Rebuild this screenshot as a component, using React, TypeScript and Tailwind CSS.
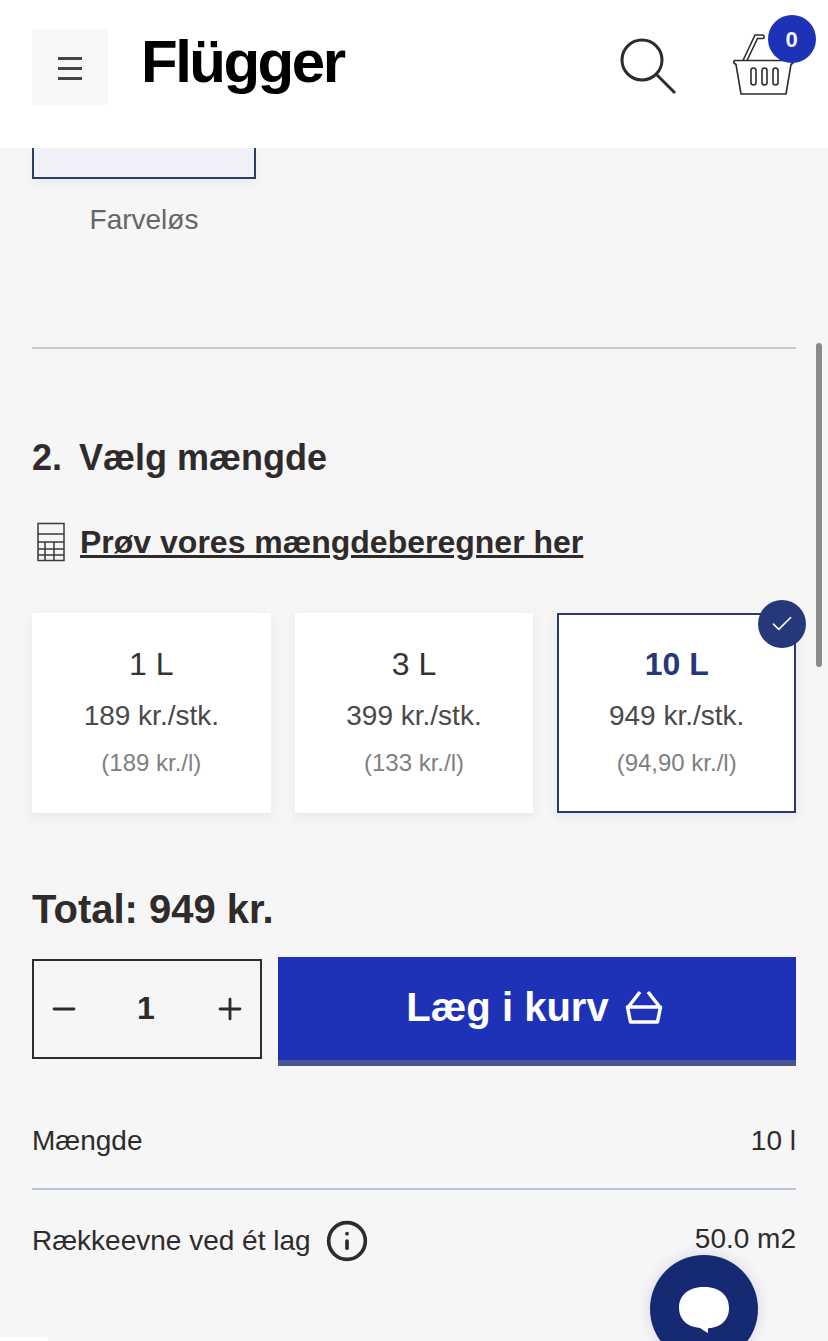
import { Check, Info, Minus, Plus } from "lucide-react";

const sizes = [
  { label: "1 L", price: "189 kr./stk.", unit: "(189 kr./l)", selected: false },
  { label: "3 L", price: "399 kr./stk.", unit: "(133 kr./l)", selected: false },
  { label: "10 L", price: "949 kr./stk.", unit: "(94,90 kr./l)", selected: true },
];

function BasketIcon() {
  return (
    <svg width="64" height="66" viewBox="0 0 64 66" fill="none" stroke="#2f2b2a" strokeWidth="1.6" strokeLinejoin="round">
      <path d="M3 29.500h57c1 0 1.500 1 1 2.500l-2 1.500-5 29.500H9L4 33.500 2 32c-.6-1 0-2.500 1-2.500Z" />
      <path d="M11 29.500 23 4h8c1.500 0 1.500 3.500 0 3.500h-5.500L15 29.500" />
      <rect x="19" y="37" width="5" height="17" rx="2.500" />
      <rect x="30" y="37" width="5" height="17" rx="2.500" />
      <rect x="41" y="37" width="5" height="17" rx="2.500" />
    </svg>
  );
}

function CalculatorIcon() {
  return (
    <svg width="32" height="40" viewBox="0 0 32 40" fill="none" stroke="#3a3a3a" strokeWidth="1.500">
      <rect x="2" y="1.500" width="26" height="37" />
      <path d="M2 12h26M9 20h19M2 27h26M2 33h26M9 20v18.500M18 20v18.500M2 20h7" />
    </svg>
  );
}

function AddToCartIcon() {
  return (
    <svg width="38" height="36" viewBox="0 0 38 36" fill="none" stroke="white" strokeWidth="3.500">
      <path d="M2.500 18h33l-3 15h-27Z" strokeLinejoin="round" />
      <path d="M4 17 15 3M34 17 23 3" />
    </svg>
  );
}

export default function App() {
  return (
    <div className="relative h-[1341px] w-[828px] overflow-hidden bg-[#f6f6f7] font-['Liberation_Sans',Arial,sans-serif] text-[#2f2b2a]">
      <header className="flex h-[148px] items-start bg-white pl-8">
        <button className="mt-[29px] flex h-[76px] w-[76px] items-center justify-center bg-[#f8f7f7]">
          <div className="mt-[2px] flex w-6 flex-col gap-[7px]">
            <span className="h-[3px] bg-[#444]" />
            <span className="h-[3px] bg-[#444]" />
            <span className="h-[3px] bg-[#444]" />
          </div>
        </button>
        <div className="mt-[28px] ml-[33px] text-[60px] leading-[68px] font-bold tracking-[-2.500px] text-black">Flügger</div>
        <svg className="mt-[38px] ml-[276px]" width="58" height="58" viewBox="0 0 58 58" fill="none" stroke="#2f2b2a" strokeWidth="3">
          <circle cx="22" cy="22" r="20" />
          <path d="M36 36 55 55" />
        </svg>
        <div className="relative mt-[31px] ml-[54px]">
          <BasketIcon />
          <div className="absolute top-[-16px] left-[36px] flex h-12 w-12 items-center justify-center rounded-full bg-[#1e32b8] text-[22px] font-bold text-[#f2f2f2]">0</div>
        </div>
      </header>

      <main className="px-8">
        <div className="h-[31px] w-[224px] border-x-2 border-b-2 border-[#2c3a6e] bg-[#f1f2f9] shadow-[0_4px_10px_rgba(0,0,0,0.05)]" />
        <p className="mt-[26px] w-[224px] text-center text-[28px] leading-[30px] text-[#666]">Farveløs</p>

        <hr className="mt-[112px] h-0.5 border-0 bg-[#c9c9c9]" />

        <h2 className="mt-[87px] flex text-[36px] leading-[44px] font-bold">
          <span className="w-[47px]">2.</span>
          <span>Vælg mængde</span>
        </h2>

        <div className="mt-[42px] flex items-center">
          <span className="mr-[12px] ml-[4px]"><CalculatorIcon /></span>
          <a className="text-[32px] leading-[40px] font-bold underline">Prøv vores mængdeberegner her</a>
        </div>

        <div className="mt-[51px] grid grid-cols-3 gap-6">
          {sizes.map((size) => (
            <div
              key={size.label}
              className={
                "relative flex h-[200px] flex-col items-center border-2 bg-white pt-[29px] shadow-[0_4px_12px_rgba(60,60,120,0.08)] " +
                (size.selected ? "border-[#2c3a6e]" : "border-white")
              }
            >
              <div className={"text-[32px] leading-[40px] " + (size.selected ? "font-bold text-[#26377a]" : "text-[#333]")}>{size.label}</div>
              <div className="mt-[16px] text-[28px] leading-[32px] text-[#4a4a4a]">{size.price}</div>
              <div className="mt-[17px] text-[24px] leading-[28px] text-[#808080]">{size.unit}</div>
              {size.selected && (
                <div className="absolute top-[-15px] right-[-12px] flex h-12 w-12 items-center justify-center rounded-full bg-[#26377a]">
                  <Check size={26} strokeWidth={1.500} color="white" />
                </div>
              )}
            </div>
          ))}
        </div>

        <div className="mt-[72px] text-[40px] leading-[48px] font-bold">Total: 949 kr.</div>

        <div className="mt-[24px] flex items-start gap-4">
          <div className="mt-[2px] flex h-[100px] w-[230px] items-center justify-between border-2 border-[#2f2b2a] px-[13px]">
            <Minus size={34} strokeWidth={2} />
            <span className="-mt-[3px] -ml-[2px] text-[32px] font-bold">1</span>
            <Plus size={34} strokeWidth={2} />
          </div>
          <button className="flex h-[109px] flex-1 items-center justify-center gap-[16px] border-b-[6px] border-[#4a5490] bg-[#1e32b8] pr-[5px] pb-[4px] text-[40px] font-bold text-white">
            Læg i kurv
            <AddToCartIcon />
          </button>
        </div>

        <div className="mt-[59px] flex justify-between text-[28px] leading-[32px]">
          <span>Mængde</span>
          <span>10 l</span>
        </div>
        <hr className="mt-[31px] h-0.5 border-0 bg-[#b5c3dc]" />
        <div className="mt-[31px] flex h-[40px] items-center justify-between text-[28px] leading-[40px]">
          <span className="flex items-center gap-[14px]">
            Rækkeevne ved ét lag
            <Info size={44} strokeWidth={2} />
          </span>
          <span className="-mt-[4px]">50.0 m2</span>
        </div>
      </main>

      <div className="absolute top-[343px] right-[6px] h-[324px] w-1.5 rounded-full bg-[#8a8a8a]" />

      <div className="absolute top-[1255px] left-[650px] flex h-[108px] w-[108px] items-start justify-center rounded-full bg-[#152a73] pt-[30px] shadow-[0_0_14px_rgba(20,40,120,0.15)]">
        <svg width="52" height="50" viewBox="0 0 52 50" fill="white">
          <path d="M26 2c14 0 25 7 25 21S40 43 31 43c-1 0-1 1-1 5-4-2-6-4-8-5C10 42 1 35 1 23 1 9 12 2 26 2Z" />
        </svg>
      </div>

      <div className="absolute bottom-0 left-0 h-1 w-[48px] rounded-tr-full bg-white" />
    </div>
  );
}
